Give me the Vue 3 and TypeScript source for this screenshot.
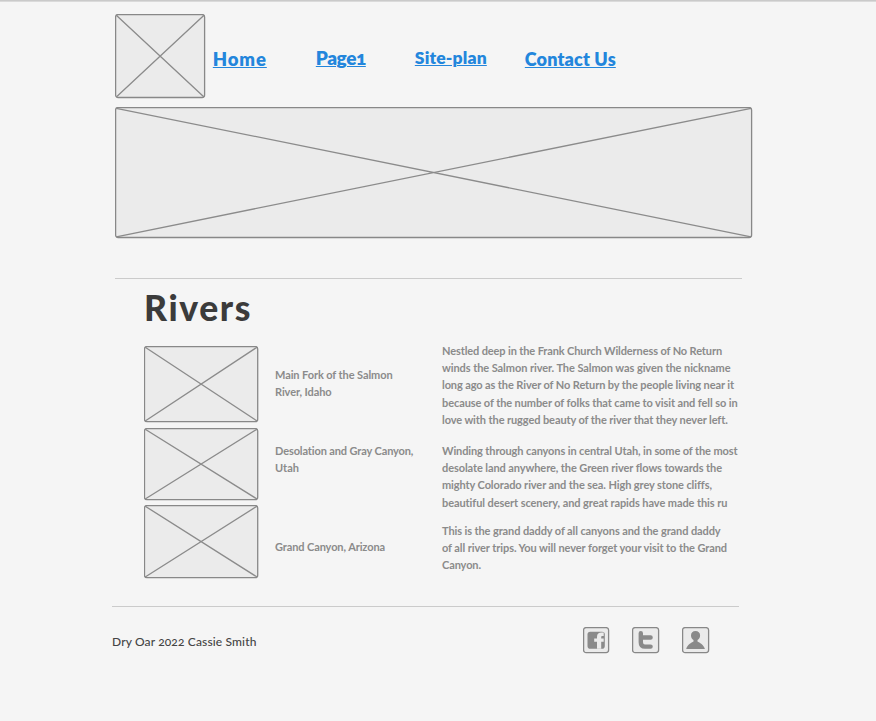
<script setup lang="ts">
interface Line { text: string; width: number }
interface Box { name: string; w: number; h: number }

const nav = [
  { text: 'Home', width: 54, cls: 'home' },
  { text: 'Page1', width: 50, cls: 'first' },
  { text: 'Site-plan', width: 72, cls: 'plan' },
  { text: 'Contact Us', width: 91, cls: 'contact' },
]
const thumbs: Box[] = [
  { name: 'salmon', w: 115, h: 77 },
  { name: 'desolation', w: 115, h: 73 },
  { name: 'grand', w: 115, h: 74 },
]
const labels: { name: string; lines: Line[] }[] = [
  { name: 'salmon', lines: [{ text: 'Main Fork of the Salmon', width: 117.5 }, { text: 'River, Idaho', width: 56.5 }] },
  { name: 'desolation', lines: [{ text: 'Desolation and Gray Canyon,', width: 138.5 }, { text: 'Utah', width: 24 }] },
  { name: 'grand', lines: [{ text: 'Grand Canyon, Arizona', width: 110 }] },
]
const stories: { name: string; lines: Line[] }[] = [
  { name: 'salmon', lines: [
    { text: 'Nestled deep in the Frank Church Wilderness of No Return', width: 280 },
    { text: 'winds the Salmon river. The Salmon was given the nickname', width: 288.5 },
    { text: 'long ago as the River of No Return by the people living near it', width: 292 },
    { text: 'because of the number of folks that came to visit and fell so in', width: 295.5 },
    { text: 'love with the rugged beauty of the river that they never left.', width: 285.5 },
  ] },
  { name: 'desolation', lines: [
    { text: 'Winding through canyons in central Utah, in some of the most', width: 295.5 },
    { text: 'desolate land anywhere, the Green river flows towards the', width: 280 },
    { text: 'mighty Colorado river and the sea. High grey stone cliffs,', width: 269.5 },
    { text: 'beautiful desert scenery, and great rapids have made this ru', width: 285.5 },
  ] },
  { name: 'grand', lines: [
    { text: 'This is the grand daddy of all canyons and the grand daddy', width: 278.5 },
    { text: 'of all river trips. You will never forget your visit to the Grand', width: 285 },
    { text: 'Canyon.', width: 39 },
  ] },
]

// Tracks a line of text so that it spans the given measure.
const vFit = {
  mounted(el: HTMLElement, binding: { value: number }) {
    const count = (el.textContent ?? '').length
    const natural = el.getBoundingClientRect().width
    el.style.letterSpacing = `${(binding.value - natural) / count}px`
  },
}
</script>

<template>
  <div class="page">
    <header class="header">
      <svg class="ph" width="91" height="85">
        <rect class="frame" x="0.6" y="0.5" width="89" height="83" rx="2.5" />
        <path class="cross" d="M1.3 1.3 89 83M89 1.3 1.3 83" />
      </svg>
      <nav class="nav">
        <a v-for="n in nav" :key="n.text" v-fit="n.width" :class="n.cls">{{ n.text }}</a>
      </nav>
    </header>
    <svg class="ph banner" width="638" height="132">
      <rect class="frame" x="0.6" y="0.5" width="636" height="130" rx="2.5" />
      <path class="cross" d="M1.3 1.3 636 129.8M636 1.3 1.3 129.8" />
    </svg>
    <hr class="rule top-rule" />
    <main>
      <h1><span v-fit="108">Rivers</span></h1>
      <div class="columns">
        <div class="thumbs">
          <svg v-for="t in thumbs" :key="t.name" class="ph" :class="t.name" :width="t.w" :height="t.h">
            <rect class="frame" x="0.5" y="0.5" :width="t.w - 1.8" :height="t.h - 1.8" rx="2.5" />
            <path class="cross" :d="`M1.2 1.2 ${t.w - 2} ${t.h - 2}M${t.w - 2} 1.2 1.2 ${t.h - 2}`" />
          </svg>
        </div>
        <div class="labels">
          <p v-for="l in labels" :key="l.name" :class="l.name">
            <span v-for="line in l.lines" :key="line.text" class="line"><span v-fit="line.width">{{ line.text }}</span></span>
          </p>
        </div>
        <div class="stories">
          <p v-for="s in stories" :key="s.name" :class="s.name">
            <span v-for="line in s.lines" :key="line.text" class="line"><span v-fit="line.width">{{ line.text }}</span></span>
          </p>
        </div>
      </div>
    </main>
    <hr class="rule bottom-rule" />
    <footer class="footer">
      <span v-fit="144.5" class="copy">Dry Oar 2022 Cassie Smith</span>
      <div class="social">
        <svg width="27" height="27" viewBox="0 0 27 27">
          <rect class="tile" x="0.6" y="0.6" width="25" height="25" rx="2.5" />
          <rect class="glyph" x="4.5" y="4.7" width="17.3" height="17" rx="2.8" />
          <path class="cut" d="M14 21.7V14.8H11.2V11.4H14V9.9C14 6.9 15.8 5.6 18.6 5.6H20.7V9H19.4C18.5 9 18.2 9.4 18.2 10.2V11.4H20.7V14.8H18.2V21.7Z" />
        </svg>
        <svg width="28" height="27" viewBox="0 0 28 27">
          <rect class="tile" x="0.6" y="0.6" width="26" height="25" rx="2.5" />
          <path class="bird" d="M8.8 6.2V15.2Q8.8 19.6 13 19.6H18.6M8.8 10.5H18.6" />
        </svg>
        <svg width="28" height="27" viewBox="0 0 28 27">
          <rect class="tile" x="0.6" y="0.6" width="26" height="25" rx="2.5" />
          <path class="glyph" d="M13.5 4C10.8 4 9 5.8 9 8.4C9 10.4 10 12 11.5 12.9V14.4C9.5 15.6 5.2 17.5 4.2 22H22.9C21.8 17.5 17.5 15.6 15.5 14.4V12.9C17 12 18.1 10.4 18.1 8.4C18.1 5.8 16.2 4 13.5 4Z" />
        </svg>
      </div>
    </footer>
  </div>
</template>

<style>
body { background: #f5f5f5; }
</style>

<style scoped>
.page {
  box-sizing: border-box;
  height: 721px;
  padding: 13px 0 0 115px;
  border-top: 1px solid #cacaca;
  box-shadow: inset 0 1px 0 #dadada;
  background: #f5f5f5;
  color: #8b8b8b;
  font-family: Lato, "Noto Sans", sans-serif;
  overflow: hidden;
}
svg { display: block; flex: none; }
.frame { fill: #ebebeb; stroke: #888; stroke-width: 1.3; }
.cross { fill: none; stroke: #8b8b8b; stroke-width: 1.3; }
.header { display: flex; height: 93px; margin-left: -0.2px; }
.nav { display: flex; padding: 32px 0 0 7px; white-space: nowrap; }
.nav a {
  color: #2386dc;
  font-size: 18.5px;
  font-weight: 800;
  line-height: 24px;
  text-decoration: underline;
  text-decoration-thickness: 1px;
  text-underline-offset: 1px;
}
.nav .home { margin-top: 1px; }
.nav .first { margin-left: 49px; font-size: 19px; font-variant-numeric: oldstyle-nums; }
.nav .plan { margin-left: 49px; font-size: 17.5px; }
.nav .contact { margin: 1px 0 0 38px; font-size: 18px; }
.rule { height: 1px; width: 627px; border: 0; background: #cbcbcb; }
.top-rule { margin: 39px 0 0; }
h1 {
  margin: 7px 0 0 29px;
  color: #3b3b3b;
  font-size: 35.5px;
  font-weight: 900;
  line-height: 44px;
}
h1 span { display: inline-block; }
.columns { display: flex; margin: 16px 0 0 29px; height: 232px; font-size: 11px; font-weight: 700; line-height: 17.2px; }
.thumbs { width: 131px; display: flex; flex-direction: column; }
.thumbs .desolation { margin-top: 5px; }
.thumbs .grand { margin-top: 4px; }
.labels { width: 167px; padding-top: 20px; }
.stories { margin-top: -4px; }
p { margin: 0; white-space: nowrap; }
.line { display: block; }
.line > span { display: inline-block; }
.labels .desolation { margin-top: 41.5px; }
.labels .grand { margin-top: 61.5px; }
.stories .desolation { margin-top: 14px; }
.stories .grand { margin-top: 11px; }
.bottom-rule { margin: 28px 0 0 -3px; }
.footer { display: flex; justify-content: space-between; width: 598px; margin: 20px 0 0 -3px; }
.copy { align-self: flex-start; padding-top: 6px; color: #444; font-size: 12px; font-weight: 500; line-height: 18px; font-variant-numeric: oldstyle-nums; white-space: nowrap; }
.social { display: flex; gap: 22px; }
.tile { fill: #ebebeb; stroke: #888; stroke-width: 1.3; }
.glyph { fill: #8a8a8a; }
.cut { fill: #ebebeb; }
.bird { fill: none; stroke: #8a8a8a; stroke-width: 4.4; stroke-linecap: round; stroke-linejoin: round; }
</style>
